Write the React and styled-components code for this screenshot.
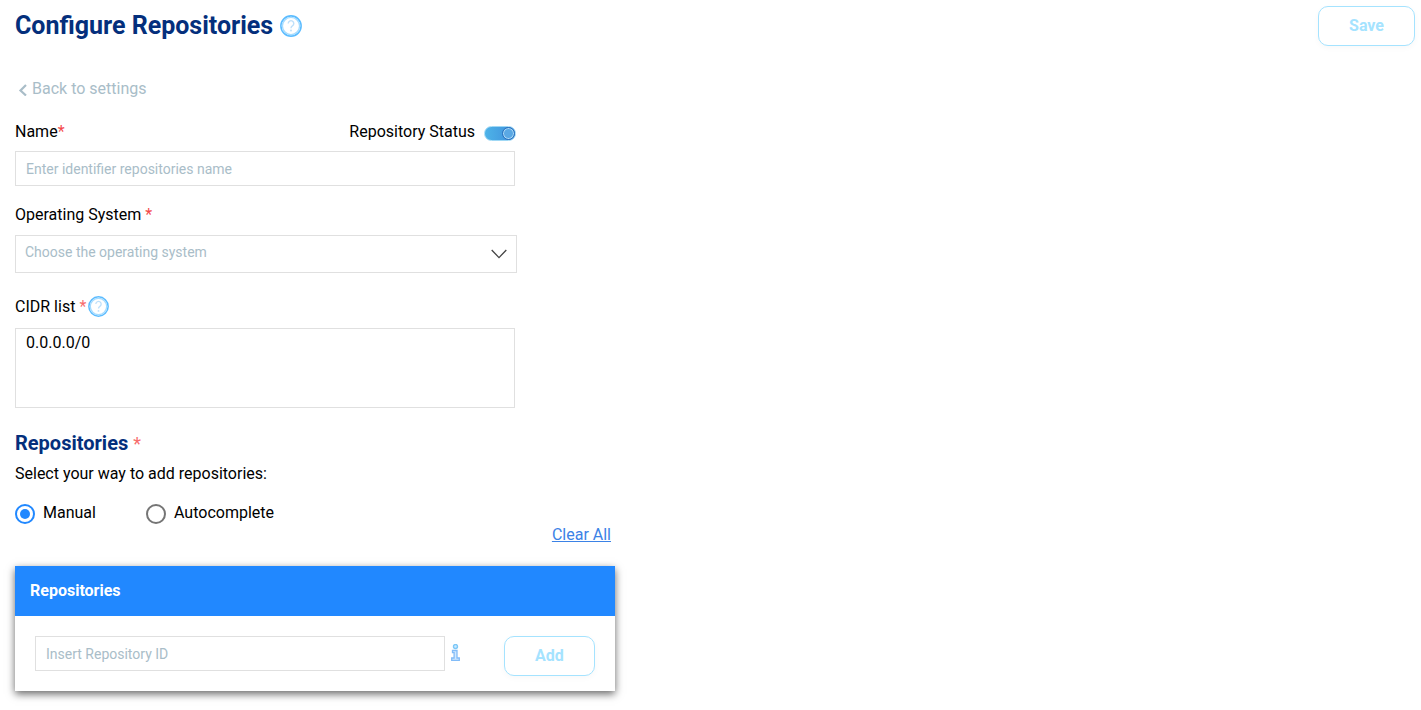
import React from "react";
import styled, { createGlobalStyle } from "styled-components";

const Global = createGlobalStyle`
  html, body { margin: 0; padding: 0; background: #fff; }
  body { font-family: Roboto, "Liberation Sans", sans-serif; color: #000; overflow: hidden; }
  * { box-sizing: border-box; }
`;

const Page = styled.div`
  width: 1421px;
  height: 710px;
  padding: 6px 6px 0 15px;
  display: flex;
  flex-direction: column;
`;
const Header = styled.header`
  display: flex;
  justify-content: space-between;
  align-items: flex-start;
  height: 40px;
`;
const TitleRow = styled.div`
  display: flex;
  align-items: center;
  gap: 7px;
  height: 40px;
`;
const Title = styled.h1`
  margin: 0;
  font-size: 25px;
  line-height: 40px;
  font-weight: 700;
  color: #042f7c;
`;
const GhostButton = styled.button`
  width: ${(p) => p.$w}px;
  height: 40px;
  border: 1px solid #a5e3ff;
  border-radius: 10px;
  background: #fff;
  color: #a5e3ff;
  font: 700 16px Roboto, sans-serif;
  box-shadow: 0 2px 6px rgba(0, 0, 0, 0.03);
  padding: 0 0 2px;
`;
const Back = styled.div`
  margin-top: 31px;
  height: 22px;
  padding-left: 3px;
  display: flex;
  align-items: center;
  gap: 5px;
  font-size: 16px;
  color: #a9bdc8;
`;
const Form = styled.main`
  width: 600px;
  display: flex;
  flex-direction: column;
`;
const LabelRow = styled.div`
  width: 501px;
  display: flex;
  justify-content: space-between;
  align-items: center;
  height: 20px;
  margin-top: ${(p) => p.$top}px;
  font-size: 16px;
`;
const Label = styled.div`
  display: flex;
  align-items: center;
  line-height: 20px;
  font-size: 16px;
`;
const NameLabel = styled(Label)`
  padding-top: 1px;
`;
const Star = styled.span`
  color: ${(p) => p.$color || "#f44a4a"};
  margin-left: ${(p) => p.$gap || 0}px;
`;
const HelpSlot = styled.span`
  display: flex;
  margin: -2px 0 0 2px;
`;
const StatusGroup = styled.div`
  display: flex;
  align-items: center;
  gap: 9px;
`;
const Toggle = styled.div`
  position: relative;
  width: 32px;
  height: 15px;
  margin-top: 5px;
  border-radius: 8px;
  border: 1px solid #9fd8f5;
  background: linear-gradient(90deg, #4db3e8, #3f8fdb);
`;
const Knob = styled.span`
  position: absolute;
  right: 0;
  top: 0;
  width: 13px;
  height: 13px;
  border-radius: 50%;
  background: #5aa8e4;
  border: 1px solid #2a6fbd;
  box-shadow: inset 0 0 0 1px #a9d8f5;
`;
const TextInput = styled.input`
  display: block;
  width: ${(p) => p.$w}px;
  height: 35px;
  margin-top: 10px;
  padding: 0 10px;
  border: 1px solid #e0e0e0;
  background: #fff;
  font: 14px Roboto, sans-serif;
  outline: none;
  &::placeholder { color: #a9bdc8; opacity: 1; }
`;
const Select = styled.div`
  width: 502px;
  height: 38px;
  margin-top: 10px;
  padding: 0 9px 0 9px;
  border: 1px solid #e0e0e0;
  display: flex;
  align-items: center;
  justify-content: space-between;
  font-size: 14px;
  color: #a9bdc8;
`;
const SelectText = styled.span`
  margin-bottom: 4px;
`;
const TextArea = styled.textarea`
  display: block;
  width: 500px;
  height: 80px;
  margin-top: 11px;
  padding: 4px 10px;
  border: 1px solid #e0e0e0;
  font: 16px/20px Roboto, sans-serif;
  color: #000;
  resize: none;
  outline: none;
`;
const SectionTitle = styled.h2`
  margin: 24px 0 0;
  font-size: 20px;
  line-height: 22px;
  font-weight: 700;
  color: #042f7c;
  & > span { font-weight: 400; font-size: 18px; }
`;
const Hint = styled.div`
  margin-top: 9px;
  font-size: 16px;
  line-height: 20px;
`;
const RadioRow = styled.div`
  display: flex;
  margin-top: 18px;
  height: 22px;
`;
const RadioItem = styled.label`
  display: flex;
  align-items: center;
  gap: 8px;
  width: ${(p) => p.$w}px;
  font-size: 16px;
  line-height: 20px;
`;
const RadioMark = styled.span`
  width: 20px;
  height: 20px;
  margin-top: 2px;
  border-radius: 50%;
  border: 2px solid ${(p) => (p.$on ? "#2188ff" : "#757575")};
  display: flex;
  align-items: center;
  justify-content: center;
  &::after {
    content: "";
    width: 10px;
    height: 10px;
    border-radius: 50%;
    background: ${(p) => (p.$on ? "#2188ff" : "transparent")};
  }
`;
const ClearRow = styled.div`
  display: flex;
  justify-content: flex-end;
  padding-right: 4px;
  margin-top: 1px;
`;
const ClearLink = styled.a`
  font-size: 16px;
  line-height: 20px;
  color: #3b82e6;
  text-decoration: underline;
`;
const Card = styled.section`
  margin-top: 21px;
  height: 125px;
  background: #fff;
  box-shadow: 0 3px 8px rgba(0, 0, 0, 0.6);
`;
const CardHead = styled.div`
  height: 50px;
  background: #2188ff;
  color: #fff;
  padding: 0 0 2px 15px;
  display: flex;
  align-items: center;
  font-size: 16px;
  font-weight: 700;
`;
const CardBody = styled.div`
  display: flex;
  align-items: flex-start;
  padding: 20px 20px 0;
`;
const InfoIcon = styled.span`
  margin: 8px 0 0 6px;
  width: 9px;
  display: flex;
`;
const AddWrap = styled.div`
  margin-left: auto;
`;
const CardInput = styled(TextInput)`
  margin-top: 0;
`;

const Help = ({ size = 22 }) => (
  <svg width={size} height={size} viewBox="0 0 22 22" fill="none">
    <circle cx="11" cy="11" r="10.1" stroke="#5cbcff" strokeWidth="1.6" />
    <circle cx="11" cy="11" r="8.6" stroke="#a6dcff" strokeWidth="1.4" />
    <path d="M8.2 8.4a2.8 2.8 0 1 1 4.2 2.5c-.9.5-1.4 1.1-1.4 2.3" stroke="#bfe0fa" strokeWidth="1.4" />
    <circle cx="11" cy="15.6" r="1" fill="#bfe0fa" />
  </svg>
);

export default function App() {
  return (
    <Page>
      <Global />
      <Header>
        <TitleRow>
          <Title>Configure Repositories</Title>
          <Help />
        </TitleRow>
        <GhostButton $w={97}>Save</GhostButton>
      </Header>
      <Back>
        <svg width="9" height="12" viewBox="0 0 9 12" fill="none" style={{ marginTop: 3 }}>
          <path d="M8 1 2.5 6.5 8 11.5" stroke="#a9bdc8" strokeWidth="2.2" />
        </svg>
        Back to settings
      </Back>
      <Form>
        <LabelRow $top={22}>
          <NameLabel>Name<Star>*</Star></NameLabel>
          <StatusGroup>
            Repository Status
            <Toggle><Knob /></Toggle>
          </StatusGroup>
        </LabelRow>
        <TextInput $w={500} placeholder="Enter identifier repositories name" />
        <LabelRow $top={19}>
          <Label>Operating System<Star $gap={4}>*</Star></Label>
        </LabelRow>
        <Select>
          <SelectText>Choose the operating system</SelectText>
          <svg width="16" height="10" viewBox="0 0 16 10" fill="none">
            <path d="M.7 1 8 8.6 15.3 1" stroke="#444" strokeWidth="1.3" />
          </svg>
        </Select>
        <LabelRow $top={24}>
          <Label>
            CIDR list<Star $gap={4} $color="#f76d6d">*</Star>
            <HelpSlot><Help size={21} /></HelpSlot>
          </Label>
        </LabelRow>
        <TextArea defaultValue="0.0.0.0/0" />
        <SectionTitle>Repositories <span><Star $color="#f76d6d">*</Star></span></SectionTitle>
        <Hint>Select your way to add repositories:</Hint>
        <RadioRow>
          <RadioItem $w={131}><RadioMark $on />Manual</RadioItem>
          <RadioItem $w={140}><RadioMark />Autocomplete</RadioItem>
        </RadioRow>
        <ClearRow><ClearLink>Clear All</ClearLink></ClearRow>
        <Card>
          <CardHead>Repositories</CardHead>
          <CardBody>
            <CardInput $w={410} placeholder="Insert Repository ID" />
            <InfoIcon>
              <svg width="9" height="17" viewBox="0 0 9 17" fill="none">
                <circle cx="4.5" cy="2.5" r="2" fill="#cdeaff" stroke="#7cc8f7" strokeWidth="1.4" />
                <path d="M1.5 6.5h4.5v7.5h2.3v2.3H.7V14h2.4V8.6H1.5z" fill="#cfe8ff" stroke="#82bcf8" strokeWidth="1.3" />
              </svg>
            </InfoIcon>
            <AddWrap><GhostButton $w={91}>Add</GhostButton></AddWrap>
          </CardBody>
        </Card>
      </Form>
    </Page>
  );
}
